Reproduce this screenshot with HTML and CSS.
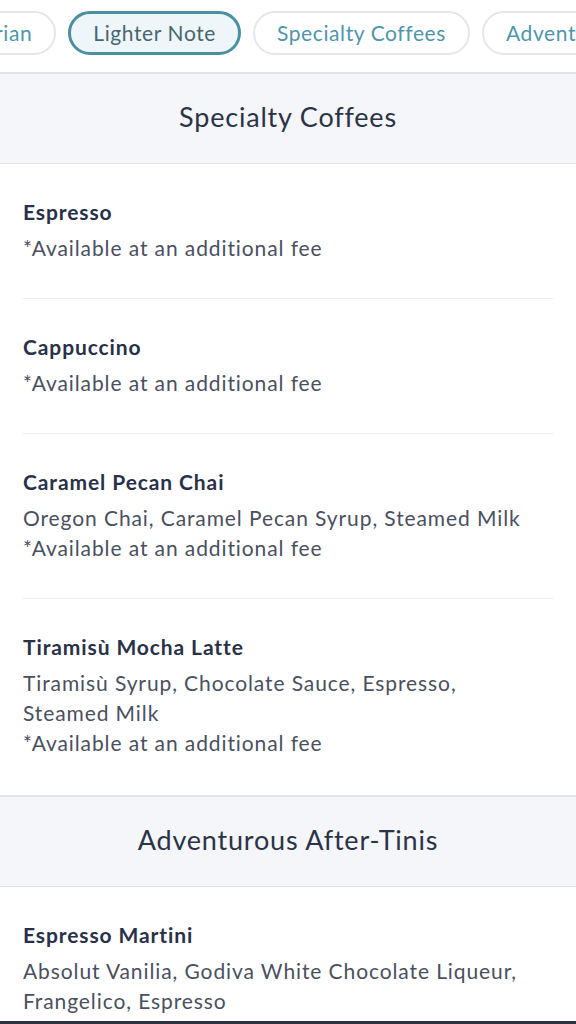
FILE: index.html
```html
<!DOCTYPE html>
<html lang="en">
<head>
  <meta charset="UTF-8" />
  <meta name="viewport" content="width=device-width, initial-scale=1.0" />
  <title>Specialty Coffees</title>
  <link rel="stylesheet" href="styles.css">
</head>
<body>
  <nav class="tabs">
    <div class="tabs-track">
      <span class="pill pill-first">Vegetarian</span>
      <span class="pill pill-active">Lighter Note</span>
      <span class="pill">Specialty Coffees</span>
      <span class="pill">Adventurous After-Tinis</span>
    </div>
  </nav>

  <section class="menu-section">
    <h2 class="section-title">Specialty Coffees</h2>
    <ul class="items">
      <li class="item">
        <h3 class="item-name">Espresso</h3>
        <p class="item-desc">*Available at an additional fee</p>
      </li>
      <li class="item">
        <h3 class="item-name">Cappuccino</h3>
        <p class="item-desc">*Available at an additional fee</p>
      </li>
      <li class="item">
        <h3 class="item-name">Caramel Pecan Chai</h3>
        <p class="item-desc">Oregon Chai, Caramel Pecan Syrup, Steamed Milk<br>*Available at an additional fee</p>
      </li>
      <li class="item">
        <h3 class="item-name">Tiramisù Mocha Latte</h3>
        <p class="item-desc">Tiramisù Syrup, Chocolate Sauce, Espresso,<br>Steamed Milk<br>*Available at an additional fee</p>
      </li>
    </ul>
  </section>

  <section class="menu-section">
    <h2 class="section-title">Adventurous After-Tinis</h2>
    <ul class="items">
      <li class="item">
        <h3 class="item-name">Espresso Martini</h3>
        <p class="item-desc">Absolut Vanilia, Godiva White Chocolate Liqueur,<br>Frangelico, Espresso</p>
      </li>
    </ul>
  </section>

  <div class="bottom-bar"></div>
</body>
</html>
```

FILE: styles.css
```css
body {
  margin: 0;
  font-family: 'Lato', 'Noto Sans', sans-serif;
  background: #fff;
  color: #283149;
  overflow: hidden;
}
.tabs {
  height: 72px;
  padding-top: 11px;
  box-sizing: border-box;
  background: #fff;
  overflow: hidden;
}
.tabs-track {
  display: flex;
  gap: 12px;
  white-space: nowrap;
}
.pill {
  flex-shrink: 0;
  box-sizing: border-box;
  height: 44px;
  display: flex;
  align-items: center;
  padding: 0 22px 2px;
  border: 2px solid #e4e6e9;
  border-radius: 22px;
  font-size: 21px;
  letter-spacing: 0.6px;
  color: #4e96aa;
}
.pill-first {
  margin-left: -96px;
}
.pill-active {
  border: 3px solid #4b8fa3;
  background: #eef6f9;
  color: #48666f;
}
.menu-section {
  border-top: 2px solid #e0e3e7;
}
.section-title {
  margin: 0;
  height: 90px;
  box-sizing: border-box;
  padding-bottom: 4px;
  display: flex;
  align-items: center;
  justify-content: center;
  background: #f4f6f9;
  border-bottom: 1px solid #dcdfe3;
  font-size: 27px;
  letter-spacing: 0.8px;
  font-weight: 400;
  color: #2b3447;
}
.items {
  list-style: none;
  margin: 0 23px;
  padding: 0;
}
.item {
  padding: 35px 0 35px;
  border-bottom: 1px solid #eceef1;
}
.item:last-child {
  border-bottom: none;
  padding-bottom: 37px;
}
.item-name {
  margin: 0;
  font-size: 21px;
  line-height: 26px;
  letter-spacing: 0.9px;
  font-weight: 700;
  color: #283149;
}
.item-desc {
  margin: 8px 0 0;
  font-size: 21px;
  line-height: 30px;
  letter-spacing: 0.9px;
  color: #4a5060;
}
.bottom-bar {
  position: fixed;
  left: 0;
  right: 0;
  bottom: 0;
  height: 3px;
  background: #2e3340;
}
```
